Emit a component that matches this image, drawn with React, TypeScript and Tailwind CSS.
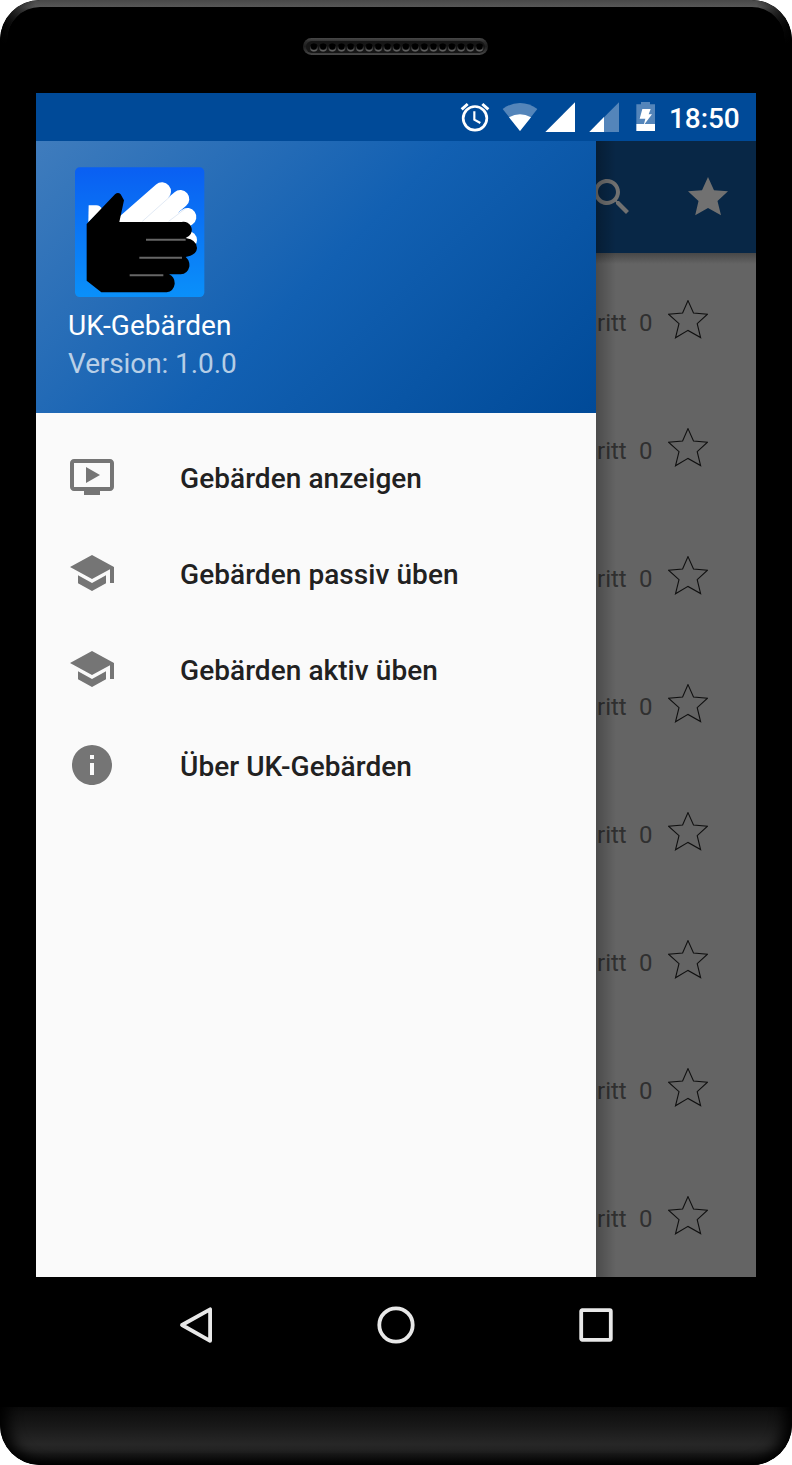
import React from "react";

const rows = [0, 1, 2, 3, 4, 5, 6, 7];
const holes = Array.from({ length: 19 }, (_, i) => 10.9 + i * 9.2);

function Rim() {
  return (
    <svg className="absolute left-0 top-0" width="792" height="60" viewBox="0 0 792 60">
      <defs>
        <linearGradient id="rimV" x1="0" y1="0" x2="0" y2="44" gradientUnits="userSpaceOnUse">
          <stop offset="0" stopColor="#484848" />
          <stop offset="0.16" stopColor="#575757" />
          <stop offset="0.35" stopColor="#3a3a3a" />
          <stop offset="0.6" stopColor="#181818" />
          <stop offset="1" stopColor="#000" />
        </linearGradient>
        <linearGradient id="rimH" x1="0" y1="0" x2="792" y2="0" gradientUnits="userSpaceOnUse">
          <stop offset="0" stopColor="#000" />
          <stop offset="0.009" stopColor="#000" stopOpacity="0.75" />
          <stop offset="0.045" stopColor="#000" stopOpacity="0" />
          <stop offset="0.955" stopColor="#000" stopOpacity="0" />
          <stop offset="0.991" stopColor="#000" stopOpacity="0.75" />
          <stop offset="1" stopColor="#000" />
        </linearGradient>
      </defs>
      {["url(#rimV)", "url(#rimH)"].map((fill) => (
        <path
          key={fill}
          fill={fill}
          d="M0 44V40A40 40 0 0 1 40 0H752A40 40 0 0 1 792 40V44H785V40A33 33 0 0 0 752 7H40A33 33 0 0 0 7 40V44Z"
        />
      ))}
    </svg>
  );
}

function Speaker() {
  return (
    <svg width="186" height="18" viewBox="0 0 186 18">
      <defs>
        <linearGradient id="spk" x1="0" y1="0" x2="0" y2="1">
          <stop offset="0" stopColor="#484848" />
          <stop offset="0.22" stopColor="#2c2c2c" />
          <stop offset="0.5" stopColor="#1e1e1e" />
          <stop offset="1" stopColor="#484848" />
        </linearGradient>
        <linearGradient id="hole" x1="0" y1="0" x2="0" y2="1">
          <stop offset="0.2" stopColor="#000" />
          <stop offset="1" stopColor="#707070" />
        </linearGradient>
      </defs>
      <rect x="0" y="0" width="185" height="17" rx="8.5" fill="url(#spk)" />
      <rect x="3" y="3" width="179" height="12" rx="6" fill="#161616" />
      {holes.map((x) => (
        <g key={x}>
          <circle cx={x} cy="9.4" r="4" fill="url(#hole)" />
          <circle cx={x} cy="8.7" r="3" fill="#000" />
        </g>
      ))}
    </svg>
  );
}

function StatusBar() {
  return (
    <div className="flex h-12 items-center bg-[#004a98] pl-[424px] text-white">
      <svg className="shrink-0" width="30" height="48" viewBox="60 9 90 144" fill="none" stroke="#fff">
        <circle cx="105" cy="85" r="35.5" strokeWidth="8" />
        <path d="M65 58L83 42M145 58L127 42" strokeWidth="9" />
        <path d="M103 64V89L121 99" strokeWidth="6.5" />
      </svg>
      <svg className="ml-3 shrink-0" width="36" height="48" viewBox="186 9 108 144" fill="#fff">
        <path fillOpacity=".33" d="M188 57Q211 39 240 39T292 57L240 123Z" />
        <path d="M207 82Q240 63 273 82L240 123Z" />
      </svg>
      <svg className="ml-[7px] shrink-0" width="31" height="48" viewBox="315 9 93 144" fill="#fff">
        <path d="M316 126L405 37V126Z" />
      </svg>
      <svg className="ml-3 shrink-0" width="32" height="48" viewBox="444 9 96 144" fill="#fff">
        <path fillOpacity=".33" d="M448 126L537 37V126Z" />
        <path d="M448 126L492 81V126Z" />
      </svg>
      <svg className="ml-[15px] shrink-0" width="21" height="48" viewBox="585 9 63 144" fill="#fff">
        <path fillOpacity=".33" d="M589 43H603V36H630V43H645V102H589Z" />
        <path d="M589 102H645V123H589ZM607 57H632L626 73H636L611 106L616 86H599Z" />
      </svg>
      <span className="ml-[13px] mt-[3px] text-[28px] font-medium leading-8 tracking-[-0.1px]">18:50</span>
    </div>
  );
}

function HandsLogo() {
  return (
    <svg className="block" width="130" height="130" viewBox="44 37 390 390">
      <defs>
        <linearGradient id="sky" x1="0" y1="0" x2="0" y2="1">
          <stop offset="0" stopColor="#0a5ff2" />
          <stop offset="1" stopColor="#0a90fa" />
        </linearGradient>
      </defs>
      <rect x="44" y="38" width="388" height="389" rx="14" fill="url(#sky)" />
      <path d="M85 152H108Q120 153 125 163L84 203Z" fill="#fff" />
      <g stroke="#fff" strokeWidth="54" strokeLinecap="round">
        <path d="M186 214L305 110" />
        <path d="M250 226L360 133" />
        <path d="M310 238L381 187" />
        <path d="M360 256H383" />
      </g>
      <path d="M178 202L320 126L345 160L375 205L386 240H330L300 230H178Z" fill="#fff" />
      <path d="M246 200L330 125M325 200L375 162" fill="none" stroke="#e2eaf5" strokeWidth="3" />
      <path
        fill="#000"
        d="M79 208L164 119Q173 111 181 119L191 137L177 202H363A24.500 24.500 0 0 1 376 250Q411 256 410 281Q408 302 376 307Q389 318 387 336Q382 357 361 359H326Q344 367 343 388Q340 410 319 413H123L79 378Z"
      />
      <path d="M257 255H376M237 309H365M208 362H309" stroke="#666" strokeWidth="6" />
    </svg>
  );
}

const SchoolIcon = () => (
  <path d="M5 13.180v4L12 21l7-3.820v-4L12 17l-7-3.820zM12 3L1 9l11 6 9-4.910V17h2V9L12 3z" />
);

const items = [
  {
    label: "Gebärden anzeigen",
    icon: (
      <path d="M21 3H3c-1.110 0-2 .89-2 2v12c0 1.100.89 2 2 2h5v2h8v-2h5c1.100 0 1.990-.9 1.990-2L23 5c0-1.110-.9-2-2-2zm0 14H3V5h18v12zm-5-6l-7 4V7z" />
    ),
  },
  { label: "Gebärden passiv üben", icon: <SchoolIcon /> },
  { label: "Gebärden aktiv üben", icon: <SchoolIcon /> },
  {
    label: "Über UK-Gebärden",
    icon: (
      <path d="M12 2C6.480 2 2 6.480 2 12s4.480 10 10 10 10-4.480 10-10S17.520 2 12 2zm1 15h-2v-6h2v6zm0-8h-2V7h2v2z" />
    ),
  },
];

function Drawer() {
  return (
    <nav className="flex w-[560px] shrink-0 flex-col bg-[#fafafa]">
      <header className="h-[272px] bg-[linear-gradient(135deg,#3f7cbd_0%,#1260b2_50%,#004a98_100%)] pl-8 pt-[26px] text-[28px]">
        <div className="pl-[7px]">
          <HandsLogo />
        </div>
        <div className="mt-[10px] leading-[38px] tracking-[0.06px] text-white">UK-Gebärden</div>
        <div className="leading-[38px] tracking-[-0.1px] text-white/70">Version: 1.0.0</div>
      </header>
      <ul className="pt-4">
        {items.map((item) => (
          <li key={item.label} className="flex h-24 items-center pl-8">
            <svg width="48" height="48" viewBox="0 0 24 24" fill="#757575">
              {item.icon}
            </svg>
            <span className="ml-16 pt-[3px] text-[28px] font-medium leading-8 tracking-[0.06px] text-[#212121]">{item.label}</span>
          </li>
        ))}
      </ul>
    </nav>
  );
}

function DimmedContent() {
  return (
    <div className="relative flex w-40 flex-col overflow-hidden bg-[#646464]">
      <div className="flex h-28 shrink-0 items-center bg-[#082746]">
        <svg className="-ml-2 shrink-0" width="48" height="48" viewBox="0 0 24 24" fill="#717171">
          <path d="M15.500 14h-.79l-.28-.27C15.410 12.590 16 11.110 16 9.500 16 5.910 13.090 3 9.500 3S3 5.910 3 9.500 5.910 16 9.500 16c1.610 0 3.090-.59 4.230-1.570l.27.28v.79l5 4.990L20.490 19l-4.990-5zm-6 0C7.010 14 5 11.990 5 9.500S7.010 5 9.500 5 14 7.010 14 9.500 11.990 14 9.500 14z" />
        </svg>
        <svg className="ml-[52px] shrink-0" width="40" height="40" viewBox="0 0 40 40" fill="#717171">
          <path d="M20 0L26 13.200L40 14.200L29.500 24L33 38.300L20 31L7.200 38.300L10.500 24L0 14.200L14 13.200Z" />
        </svg>
      </div>
      <div className="h-[11px] shrink-0 -mb-2 bg-gradient-to-b from-[#484848] to-[#646464]" />
      {rows.map((row) => (
        <div key={row} className="flex h-32 shrink-0 items-center pl-px text-2xl text-[#303030]">
          <span className="w-[42px] pt-[5px]">ritt</span>
          <span className="w-[29px] pt-[5px]">0</span>
          <svg className="shrink-0" width="40" height="40" viewBox="0 0 40 40" fill="none" stroke="#101010" strokeWidth="1.100">
            <path d="M20 .6L25.500 13L39.500 14.200L29.200 23.700L32.600 37.600L20 30.400L7.500 37.800L11 23.700L.5 14.200L14.600 13Z" />
          </svg>
        </div>
      ))}
      <div className="absolute inset-y-0 left-0 w-5 bg-gradient-to-r from-black/25 to-transparent" />
    </div>
  );
}

function NavBar() {
  return (
    <div className="flex h-[96px] items-center justify-between px-[176px]">
      <svg width="40" height="44" viewBox="0 0 40 44" fill="none" stroke="#e8e8e8" strokeWidth="3.800" strokeLinejoin="round">
        <path d="M34.100 5.500V37L6 21.200Z" transform="translate(0 .8)" />
      </svg>
      <svg width="40" height="40" viewBox="0 0 40 40" fill="none" stroke="#e8e8e8" strokeWidth="3.800">
        <circle cx="20" cy="20" r="16.700" />
      </svg>
      <svg width="40" height="40" viewBox="0 0 40 40" fill="none" stroke="#e8e8e8" strokeWidth="3.800" strokeLinejoin="round">
        <rect x="5.200" y="5.200" width="29.600" height="29.600" rx="1" />
      </svg>
    </div>
  );
}

export default function App() {
  return (
    <div className="h-[1465px] w-[792px] bg-white font-['Roboto',sans-serif]">
      <div className="relative flex h-[1465px] w-[792px] flex-col overflow-hidden rounded-[40px] bg-black">
        <Rim />
        <div className="flex h-[93px] shrink-0 pl-[303px] pt-[38px]">
          <Speaker />
        </div>
        <main className="mx-9 flex h-[1184px] shrink-0 flex-col overflow-hidden">
          <StatusBar />
          <div className="flex h-[1136px]">
            <Drawer />
            <DimmedContent />
          </div>
        </main>
        <NavBar />
        <div className="mt-auto h-[58px] shrink-0 rounded-b-[40px] bg-[linear-gradient(to_bottom,#0c0c0c_0%,#181818_32%,#272727_64%,#222222_74%,#000000_100%)] shadow-[inset_16px_-4px_14px_-8px_#000,inset_-16px_-4px_14px_-8px_#000]" />
      </div>
    </div>
  );
}
